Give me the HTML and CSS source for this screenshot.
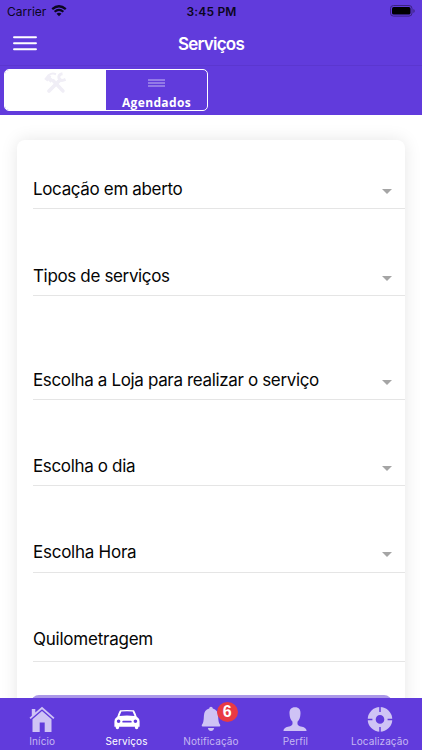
FILE: index.html
```html
<!DOCTYPE html>
<html lang="pt-BR">
<head>
<meta charset="utf-8">
<meta name="viewport" content="width=device-width, initial-scale=1">
<title>Serviços</title>
<link rel="stylesheet" href="styles.css">
</head>
<body>
<div class="app">
  <header class="header">
    <div class="status">
      <div class="carrier"><span>Carrier</span>
        <svg width="16" height="12" viewBox="0 0 16 12" fill="none" stroke="#0b0620"><path d="M1.2 4.1Q8-1.7 14.8 4.1" stroke-width="2.3"/><path d="M3.6 6.8Q8 3.1 12.4 6.8" stroke-width="2.1"/><path d="M5.5 8.7Q8 6.7 10.5 8.7L8 11.3Z" fill="#0b0620" stroke="none"/></svg>
      </div>
      <time class="time">3:45 PM</time>
      <svg class="battery" width="26" height="12" viewBox="0 0 26 12"><rect x=".5" y=".5" width="21.5" height="10.6" rx="3" fill="none" stroke="#3b237f"/><rect x="2" y="2" width="18.5" height="7.6" rx="1.7"/><path d="M23.4 4v4q1.3-.6 1.3-2t-1.3-2Z" fill="#3b237f"/></svg>
    </div>
    <div class="navbar">
      <svg class="menu" width="24" height="15" viewBox="0 0 24 15" stroke="#fff" stroke-width="1.9" stroke-linecap="round"><path d="M1 1.3h22M1 7.3h22M1 13.3h22"/></svg>
      <h1 class="title">Serviços</h1>
    </div>
    <div class="tabs">
      <div class="segment">
        <div class="seg active">
          <svg width="24" height="22" viewBox="0 0 24 22" fill="none" stroke="#f0eef6"><path d="M9 8.5l10 10.5" stroke-width="3.4" stroke-linecap="round"/><path d="M1.8 8.2L5.8 3.2M4 5.4l4 4" stroke-width="4"/><path d="M5 3Q8 .6 12 2.2" stroke-width="2"/><path d="M5 19L16 8" stroke-width="3.8" stroke-linecap="round"/><path d="M18.5 1.8Q14 2.5 15 6.2t6.6 1.2" stroke-width="3"/></svg>
        </div>
        <div class="seg">
          <svg width="17" height="8" viewBox="0 0 17 8" stroke="#c6b9f2"><path d="M0 1h17M0 4h17M0 7h17"/></svg>
          <span class="seg-label">Agendados</span>
        </div>
      </div>
    </div>
  </header>
  <main class="content">
    <form class="card">
      <div class="row first"><span>Locação em aberto</span><i class="caret"></i></div>
      <div class="row"><span>Tipos de serviços</span><i class="caret"></i></div>
      <div class="row store"><span>Escolha a Loja para realizar o serviço</span><i class="caret"></i></div>
      <div class="row day"><span>Escolha o dia</span><i class="caret"></i></div>
      <div class="row hour"><span>Escolha Hora</span><i class="caret"></i></div>
      <div class="row mileage"><span>Quilometragem</span></div>
      <div class="submit"></div>
    </form>
  </main>
  <nav class="bottom">
    <div class="item">
      <svg width="26" height="26" viewBox="0 0 26 26" fill="#cfc3f5"><path d="M2.8 3h3.5v3.6L13 .8l12.5 10.9-1.2 1.4L13 3.3 1.7 13.1.5 11.7l2.3-2Z"/><path d="M13 5l9.5 8.2V26h-6.8v-9.5h-5V26H3.5V13.2Z"/></svg>
      <span>Início</span>
    </div>
    <div class="item selected">
      <svg width="26" height="26" viewBox="0 0 26 26"><path fill="#fff" fill-rule="evenodd" d="M6.2 4.3Q6.8 3.9 13 3.9t6.8.4q.8.4 2.8 6.1 3 2 3 5v5.3h-1.3v1.1q0 1.4-1.7 1.4t-1.7-1.4v-1.1H5.1v1.1q0 1.4-1.7 1.4t-1.7-1.4v-1.1H.4v-5.3q0-3 3-5 2-5.7 2.8-6.1ZM7.4 5.4L5.5 10Q13 9.1 20.5 10L18.6 5.4Q13 4.9 7.4 5.4ZM4.6 13.5a1.8 1.8 0 1 0 0 3.6 1.8 1.8 0 0 0 0-3.6ZM21.4 13.5a1.8 1.8 0 1 0 0 3.6 1.8 1.8 0 0 0 0-3.6ZM9.2 14.8a.9.9 0 0 0 0 1.8h7.6a.9.9 0 0 0 0-1.8Z"/></svg>
      <span>Serviços</span>
    </div>
    <div class="item">
      <svg class="bell" width="26" height="26" viewBox="0 0 26 26" fill="#cfc3f5"><path d="M13 .8q1.7 0 1.8 1.6 5.1 1.3 5.3 7.3.2 7.4 2 9 .7 1.5-.6 1.7h-17q-1.3-.2-.6-1.7 1.8-1.6 2-9 .2-6 5.3-7.3Q11.3.8 13 .8Z"/><path d="M9.9 22h6.2q-.5 3-3.1 3t-3.1-3Z"/></svg>
      <span>Notificação</span>
      <b class="badge">6</b>
    </div>
    <div class="item">
      <svg width="26" height="26" viewBox="0 0 26 26" fill="#cfc3f5"><path d="M13 1.2c4 0 5.7 2.4 5.5 6.2-.1 3.8-1.3 6.6-2.9 8.1-.7 4.2 1 4.3 4.5 5.3 2.6.8 4.2 1.5 4.5 4.2H1.4c.3-2.7 1.9-3.4 4.5-4.2 3.5-1 5.2-1.1 4.5-5.3-1.6-1.5-2.8-4.3-2.9-8.1-.2-3.8 1.5-6.2 5.5-6.2Z"/></svg>
      <span>Perfil</span>
    </div>
    <div class="item">
      <svg width="26" height="26" viewBox="0 0 26 26"><circle cx="13" cy="13.4" r="8.3" fill="none" stroke="#cfc3f5" stroke-width="8"/><path d="M13 .5v5.4M13 20.9v5.4M0 13.4h5.4M20.6 13.4H26" stroke="#613bdc" stroke-width="1.5"/></svg>
      <span>Localização</span>
    </div>
  </nav>
</div>
</body>
</html>
```
FILE: styles.css
```css
* { box-sizing: border-box; }
body { margin: 0; font-family: Inter, "Liberation Sans", sans-serif; background: #fff; color: #050505; }
svg { display: block; }
.app { height: 750px; width: 422px; display: flex; flex-direction: column; overflow: hidden; }
.header { background: #613bdc; height: 115px; flex: none; }
.status { height: 22px; display: grid; grid-template-columns: 1fr auto 1fr; align-items: center; padding: 0 6px 0 7px; font-size: 12px; color: #0b0620; }
.carrier { display: flex; align-items: center; gap: 5px; letter-spacing: 0; }
.time { font-weight: 600; letter-spacing: .2px; }
.battery { justify-self: end; }
.navbar { height: 44px; display: grid; grid-template-columns: 1fr auto 1fr; align-items: center; padding: 0 13px; border-bottom: 1px solid #5b36cf; }
.title { margin: 0; font-size: 17px; font-weight: 600; letter-spacing: -.75px; color: #fff; }
.tabs { padding: 3px 4px; }
.segment { width: 204px; height: 42px; border: 1px solid #fff; border-radius: 5px; overflow: hidden; display: grid; grid-template-columns: 1fr 1fr; }
.seg { display: flex; flex-direction: column; align-items: center; padding-top: 9px; }
.seg.active { background: #fff; padding-top: 2px; }
.seg-label { color: #fff; font: 700 12px/16px "Open Sans", sans-serif; margin-top: 8px; letter-spacing: .35px; }
.content { flex: 1; min-height: 0; padding: 25px 17px 0 17px; overflow: hidden; }
.card { width: 388px; height: 640px; border-radius: 8px; background: #fff; box-shadow: 0 0 17px rgba(0,0,0,.1); padding-left: 16px; }
.row { height: 87px; display: flex; align-items: flex-end; justify-content: space-between; border-bottom: 1px solid #e5e5e5; padding: 0 13px 8px 0; font-size: 17px; line-height: 22px; letter-spacing: -.35px; white-space: nowrap; }
.first { height: 69px; }
.store { height: 104px; }
.day { height: 86px; }
.hour { letter-spacing: -.25px; padding-bottom: 9px; }
.mileage { height: 89px; padding-bottom: 11px; letter-spacing: -.23px; }
.caret { border: 5px solid transparent; border-top-color: #a5a5a5; border-bottom: 0; margin-bottom: 6px; }
.submit { height: 44px; width: 361px; margin: 33px 0 0 -2px; border-radius: 8px; background: #ab98e8; }
.bottom { height: 52px; flex: none; background: #613bdc; display: grid; grid-template-columns: repeat(5, 1fr); }
.item { position: relative; display: flex; flex-direction: column; align-items: center; padding-top: 8px; color: #c5b7f2; font-size: 10px; line-height: 12px; letter-spacing: .1px; }
.item span { margin-top: 3px; }
.item.selected { color: #fff; }
.badge { position: absolute; left: 48px; top: 4px; width: 21px; height: 20px; border-radius: 50%; background: #e93a44; color: #fff; font: 700 16px/20px "Liberation Sans", sans-serif; text-align: center; }
```
